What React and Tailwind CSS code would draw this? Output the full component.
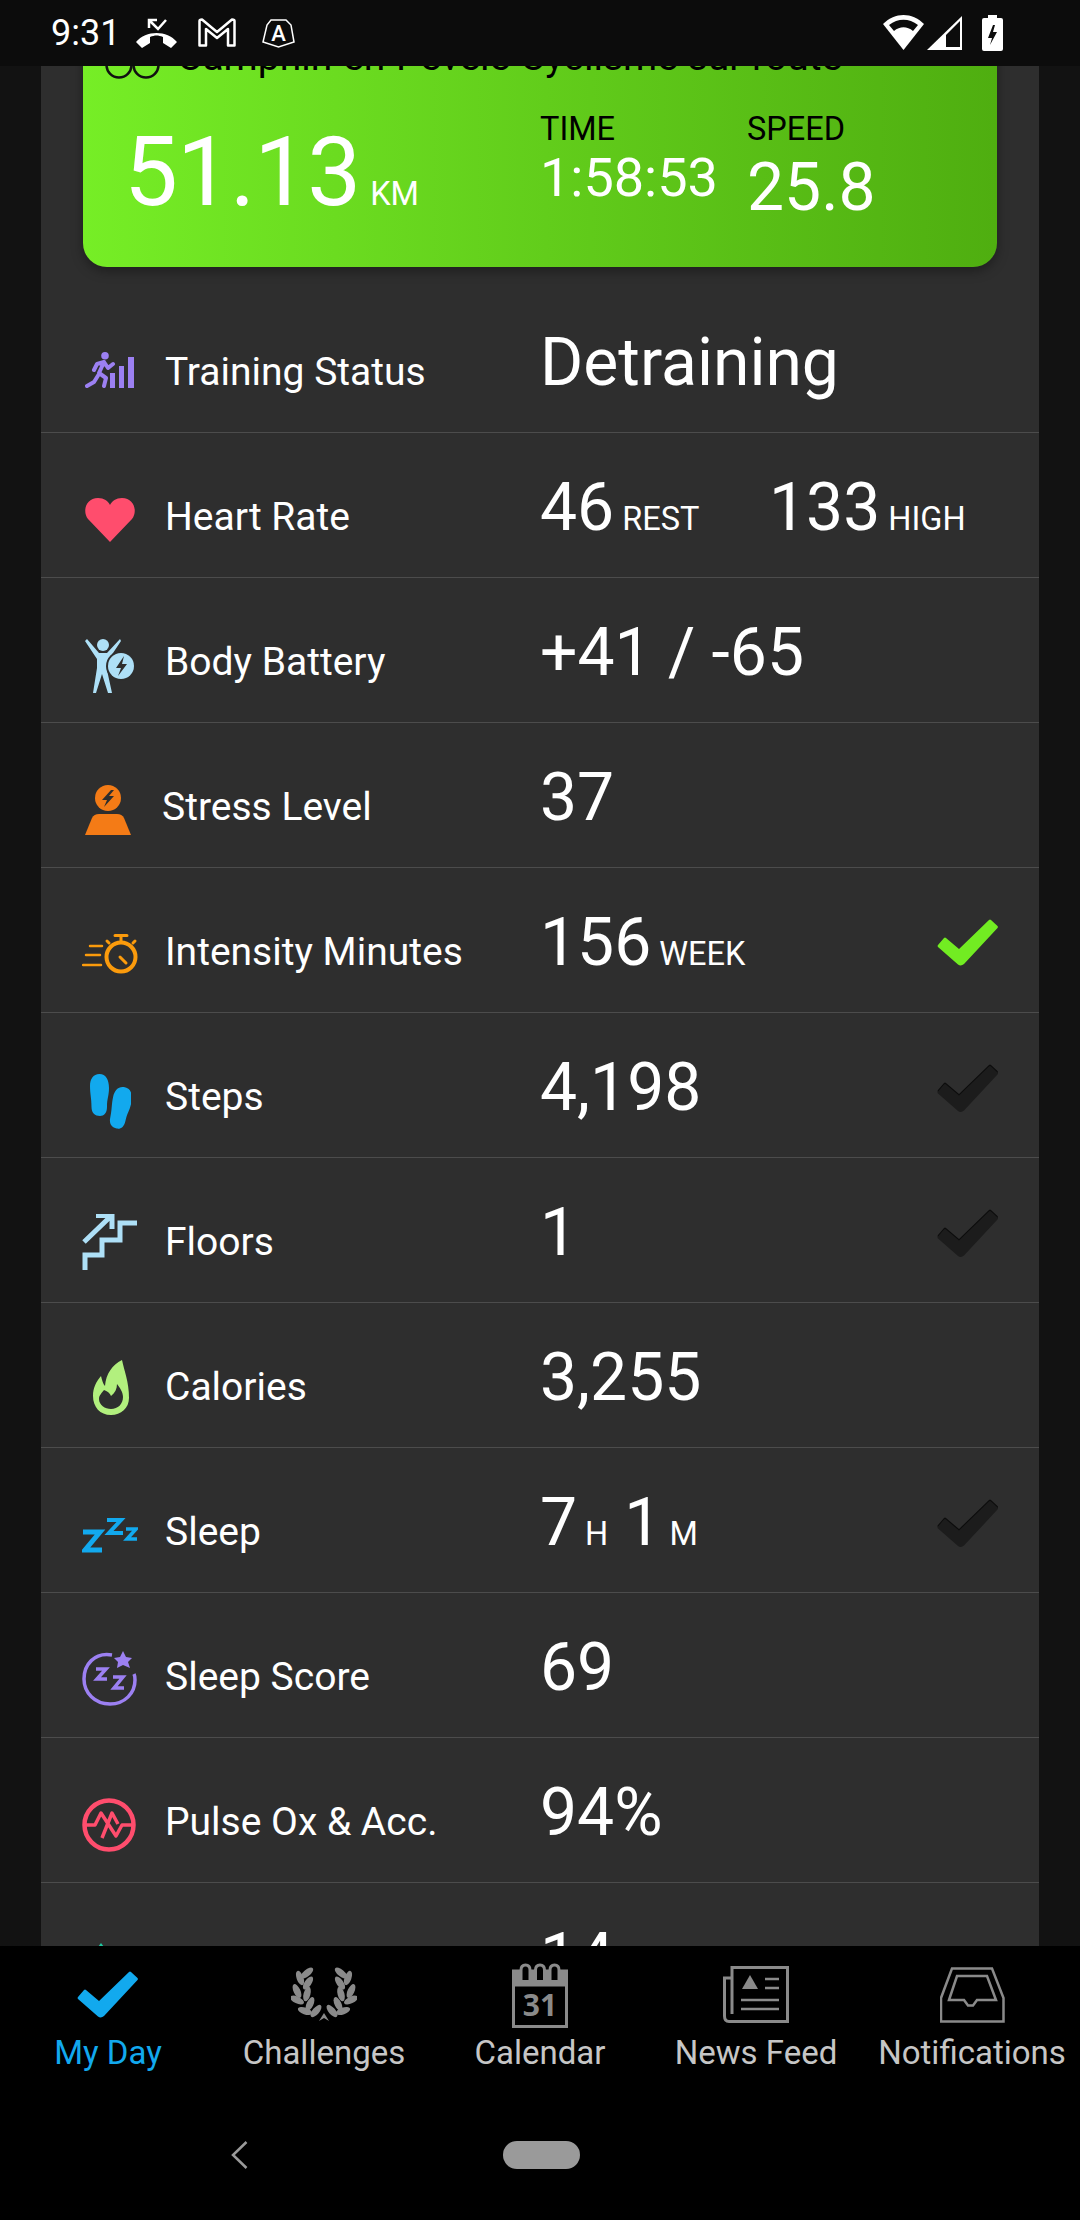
import React from "react";

const CHECK = "M52 1 Q53 0 54 1 L60.5 7 Q61.5 8 60.5 9 L27 45 Q24 47.5 21 45.5 L1 28 Q0 27 1 26 L7 19 Q8 18 9 19 L22 30 Z";

const CheckMark = ({ color = "#72ec22" }) => (
  <svg width="62" height="48" viewBox="0 0 62 48">
    <path d={CHECK} fill={color} />
  </svg>
);

const DarkCheck = () => (
  <svg width="62" height="48" viewBox="0 0 62 48">
    <path d={CHECK} fill="#0c0c0c" />
    <path d={CHECK} fill="#1c1c1c" transform="translate(0 1.6)" />
  </svg>
);

const TrainingIcon = () => (
  <svg width="50" height="36" viewBox="0 0 50 36" fill="none" stroke="#9c80f2" strokeWidth="4" strokeLinecap="round" strokeLinejoin="round">
    <circle cx="20" cy="3.8" r="3.8" fill="#9c80f2" stroke="none" />
    <path d="M19 10 L14 21 L21 26 L19 34 M14 22 L9 30 L2 34 M19 10 L12 12 L9 18 M19 10 L23 16 L28 12" />
    <path d="M25 21 H30 V36 H25 Z M34 14 H39 V36 H34 Z M43 5 H49 V36 H43 Z" fill="#9c80f2" stroke="none" />
  </svg>
);

const HeartIcon = () => (
  <svg width="50" height="44" viewBox="0 0 50 44">
    <path d="M25 44 L3 21 C-3 13 1 0 13 0 C19 0 23 3 25 7 C27 3 31 0 37 0 C49 0 53 13 47 21 Z" fill="#ff4d6d" />
  </svg>
);

const BatteryBodyIcon = () => (
  <svg width="50" height="55" viewBox="0 0 50 55">
    <circle cx="18" cy="7" r="6" fill="#aee0f7" />
    <path d="M0 3 L2 1 L14 15 H22 L35 1 L36 3 L24 21 L22 32 L27 55 H23 L17 36 L11 55 H8 L12 30 V21 Z" fill="#aee0f7" />
    <circle cx="36" cy="28" r="15" fill="#2e2e2e" />
    <circle cx="36" cy="28" r="13" fill="#aee0f7" />
    <path d="M39 18 L31 30 H36 L33 38 L42 26 H37 Z" fill="#2e2e2e" />
  </svg>
);

const StressIcon = () => (
  <svg width="46" height="50" viewBox="0 0 46 50">
    <circle cx="23" cy="13" r="13" fill="#f47b16" />
    <path d="M26 5 L17 15 H22 L19 22 L29 11 H24 L29 5 Z" fill="#2e2e2e" />
    <path d="M0 50 L7 33 Q9 29 14 29 L32 29 Q37 29 39 33 L46 50 Z" fill="#f47b16" />
  </svg>
);

const IntensityIcon = () => (
  <svg width="56" height="40" viewBox="0 0 56 40" fill="none" stroke="#fb9b0c" strokeWidth="3" strokeLinecap="round">
    <circle cx="39" cy="23" r="14.5" strokeWidth="4" />
    <path d="M33 1.5 H45 M39 2 V8 M27 9 L25 7 M51 9 L53 7" />
    <path d="M38 23 L44 29" strokeWidth="3" />
    <path d="M8 12 H20 M4 21 H18 M1 31 H19" strokeWidth="2.5" />
  </svg>
);

const FOOT = "M9.5 0 C16 0 19 6 19 14 C19 22 17 24 17 33 C17 39 14 42 10 42 C5 42 1.5 39 1.5 33 C1.5 24 0 20 0 12 C0 5 3 0 9.5 0 Z";

const StepsIcon = () => (
  <svg width="41" height="55" viewBox="0 0 41 55">
    <path d={FOOT} fill="#12a9ee" />
    <path d={FOOT} fill="#12a9ee" transform="translate(21 13) rotate(12 10 21)" />
  </svg>
);

const FloorsIcon = () => (
  <svg width="56" height="57" viewBox="0 0 56 57" fill="none" stroke="#aee0f7" strokeWidth="5">
    <path d="M3 56 V41 H20 V26 H38 V9 H55" />
    <path d="M2 28 L28 3 M14 1.5 H30 V15" />
  </svg>
);

const CaloriesIcon = () => (
  <svg width="36" height="55" viewBox="0 0 36 55">
    <path
      fillRule="evenodd"
      fill="#b2f07e"
      d="M29 0 C31 10 36 22 36 38 C36 48 28 55 18 55 C7 55 0 47 0 36 C0 28 3 22 8 16 C9 20 10 24 12 26 C13 14 19 5 29 0 Z M18 49 C25 49 30 44 30 37 C30 32 27 28 24 24 C24 29 22 33 18 36 C17 33 14 31 11 30 C9 33 6 35 6 39 C6 45 12 49 18 49 Z"
    />
  </svg>
);

const SleepIcon = () => (
  <svg width="56" height="36" viewBox="0 0 56 36" fill="none" stroke="#12a9ee">
    <path d="M1 15 H18 L3 33 H20" strokeWidth="5" />
    <path d="M25 3 H39 L27 16 H41" strokeWidth="4" />
    <path d="M44 12 H54 L45 22 H55" strokeWidth="3.5" />
  </svg>
);

const SleepScoreIcon = () => (
  <svg width="56" height="55" viewBox="0 0 56 55" fill="none" stroke="#9c80f2">
    <path d="M30 4 C12 1 2 14 2 28 C2 42 13 53 28 53 C43 53 53 42 53 29 C53 27 53 25 52 23" strokeWidth="3.5" />
    <path d="M41 0 L44 6 L50 7 L46 11 L48 17 L41 14 L35 17 L36 11 L32 7 L38 6 Z" fill="#9c80f2" stroke="none" />
    <path d="M14 18 H24 L15 28 H25 M31 26 H41 L32 37 H42" strokeWidth="3.5" />
  </svg>
);

const PulseIcon = () => (
  <svg width="54" height="54" viewBox="0 0 54 54" fill="none" stroke="#ff4d6d" strokeLinejoin="round">
    <ellipse cx="27" cy="27" rx="24.5" ry="24.5" strokeWidth="4.5" />
    <path d="M3 27 H13 L19 15 L34 38 L40 27 H51 M20 40 L30 15 L36 26" strokeWidth="3.5" />
  </svg>
);

const PartialIcon = () => (
  <svg width="20" height="8" viewBox="0 0 20 8">
    <path d="M10 0 L16 8 H4 Z" fill="#1fc8a0" />
  </svg>
);

const Leaf = ({ x, y, r }) => (
  <ellipse cx={x} cy={y} rx="7.5" ry="3.4" transform={`rotate(${r} ${x} ${y})`} />
);

const LaurelSide = () => (
  <>
    <Leaf x={16} y={6} r={-40} />
    <Leaf x={9} y={11} r={70} />
    <Leaf x={17} y={16} r={-55} />
    <Leaf x={6} y={24} r={65} />
    <Leaf x={16} y={27} r={-75} />
    <Leaf x={6} y={33} r={25} />
    <Leaf x={19} y={37} r={-65} />
    <Leaf x={14} y={44} r={20} />
    <Leaf x={25} y={44} r={-50} />
  </>
);

const LaurelIcon = () => (
  <svg width="66" height="56" viewBox="0 0 66 56" fill="#8a8a8a">
    <LaurelSide />
    <g transform="translate(66 0) scale(-1 1)">
      <LaurelSide />
    </g>
    <path d="M33 46 L38 54 L33 51 L28 54 Z" />
  </svg>
);

const CalendarIcon = () => (
  <svg width="56" height="65" viewBox="0 0 56 65" fill="none" stroke="#8a8a8a" strokeWidth="3">
    <path d="M1.5 9 H54.5 V63.5 H1.5 Z" />
    <path d="M1.5 8 H54.5 V22 H1.5 Z" fill="#8a8a8a" />
    <path d="M9 17 V7 Q9 2 13.500 2 Q18 2 18 7 V17 M23.500 17 V7 Q23.500 2 28 2 Q32.500 2 32.500 7 V17 M38 17 V7 Q38 2 42.500 2 Q47 2 47 7 V17" fill="#000" />
    <text x="28" y="53" textAnchor="middle" fill="#8a8a8a" stroke="none" fontSize="30" fontWeight="700" fontFamily="Open Sans, sans-serif">31</text>
  </svg>
);

const NewsIcon = () => (
  <svg width="66" height="58" viewBox="0 0 66 58" fill="none" stroke="#8a8a8a" strokeWidth="3">
    <path d="M9 48 V1.500 H64.500 V55.500 H6 Q1.500 55.500 1.500 50 V12 H9" />
    <path d="M27 9 L19 23 H35 Z" fill="#8a8a8a" stroke="none" />
    <path d="M42 13 H56 M42 22 H56 M18 34 H56 M18 43 H56" strokeWidth="2.500" />
  </svg>
);

const InboxIcon = () => (
  <svg width="65" height="56" viewBox="0 0 65 56" fill="none" stroke="#8a8a8a" strokeWidth="2.500">
    <path d="M1 31 L12 1.500 H52 L63.500 31 V54.500 H1 Z" />
    <path d="M9 33 L17 9 H47 L56 33 H37 L33 38.500 H28 L24 33 Z" />
  </svg>
);

const MissedCallIcon = () => (
  <svg width="41" height="30" viewBox="0 0 41 30" fill="#fff">
    <path d="M0 24 C10 12 31 12 41 24 L35 30 L27 25 V19 C22 17 19 17 14 19 V25 L6 30 Z" />
    <path d="M13 10 V2 H21 M13 2 L22 11 L30 2" fill="none" stroke="#fff" strokeWidth="2.500" />
  </svg>
);

const MailIcon = () => (
  <svg width="38" height="29" viewBox="0 0 38 29">
    <path d="M1.500 27.500 V3 Q1.500 1.500 4 1.500 L19 14 L34 1.500 Q36.500 1.500 36.500 3 V27.500 H30 V11 L19 20 L8 11 V27.500 Z" fill="none" stroke="#fff" strokeWidth="2.500" strokeLinejoin="round" />
  </svg>
);

const ShieldIcon = () => (
  <svg width="33" height="30" viewBox="0 0 33 30">
    <path d="M9 2 H24 L29 7 L32 24 L16.500 29 L1 24 L5 7 Z" fill="none" stroke="#fff" strokeWidth="1.500" />
    <text x="16.500" y="23" textAnchor="middle" fontSize="22" fontWeight="500" fill="#fff" fontFamily="Roboto, sans-serif">A</text>
  </svg>
);

const WifiIcon = () => (
  <svg width="41" height="35" viewBox="0 0 41 35">
    <path d="M0 9 C12 -3 29 -3 41 9 L20.500 35 Z" fill="#fff" />
    <path d="M6 10 C15 3 26 3 35 10 L30 16 C24 11 17 11 11 16 Z" fill="#0c0c0c" />
  </svg>
);

const SignalIcon = () => (
  <svg width="35" height="34" viewBox="0 0 35 34">
    <path d="M0 34 L35 0 V34 Z" fill="#fff" />
    <path d="M19 19 L33 5 V31 H19 Z" fill="#0c0c0c" />
  </svg>
);

const BatteryIcon = () => (
  <svg width="21" height="36" viewBox="0 0 21 36">
    <path d="M6 0 H15 V3 H19 Q21 3 21 5 V34 Q21 36 19 36 H2 Q0 36 0 34 V5 Q0 3 2 3 H6 Z" fill="#fff" />
    <path d="M11 10 L6 23 H10 L8 30 L15 17 H11 L13 10 Z" fill="#0c0c0c" />
  </svg>
);

const Unit = ({ children, className = "" }) => (
  <span className={`text-[32.5px] ml-[8px] ${className}`}>{children}</span>
);

const rows = [
  { icon: <TrainingIcon />, label: "Training Status", value: "Detraining", iconTop: "mt-[52px]" },
  {
    icon: <HeartIcon />,
    label: "Heart Rate",
    value: (
      <div className="flex items-baseline">
        <span className="w-[229px]">46<Unit>REST</Unit></span>
        <span>133<Unit>HIGH</Unit></span>
      </div>
    ),
    iconTop: "mt-[57px]",
  },
  { icon: <BatteryBodyIcon />, label: "Body Battery", value: "+41 / -65", iconTop: "mt-[57px]" },
  { icon: <StressIcon />, label: "Stress Level", value: "37", iconTop: "mt-[57px]", labelClass: "-ml-[3px] w-[378px]" },
  { icon: <IntensityIcon />, label: "Intensity Minutes", value: <>156<Unit>WEEK</Unit></>, check: "green", iconTop: "mt-[56px]", iconLeft: "-ml-[3px]" },
  { icon: <StepsIcon />, label: "Steps", value: "4,198", check: "dark", iconTop: "mt-[58px]", iconLeft: "ml-[5px]" },
  { icon: <FloorsIcon />, label: "Floors", value: "1", check: "dark", iconTop: "mt-[54px]", iconLeft: "-ml-[3px]" },
  { icon: <CaloriesIcon />, label: "Calories", value: "3,255", iconTop: "mt-[54px]", iconLeft: "ml-[8px]" },
  {
    icon: <SleepIcon />,
    label: "Sleep",
    value: (
      <>
        7<Unit>H</Unit><span className="ml-[16px]">1</span><Unit>M</Unit>
      </>
    ),
    check: "dark",
    iconTop: "mt-[57px]",
    iconLeft: "-ml-[3px]",
  },
  { icon: <SleepScoreIcon />, label: "Sleep Score", value: "69", iconTop: "mt-[55px]", iconLeft: "-ml-[3px]" },
  { icon: <PulseIcon />, label: "Pulse Ox & Acc.", value: "94%", iconTop: "mt-[57px]", iconLeft: "-ml-[3px]" },
  { icon: <PartialIcon />, label: "", value: "14", iconTop: "mt-[34px]", iconLeft: "ml-[6px]" },
];

const StatRow = ({ row }) => (
  <div className="relative flex items-baseline h-[145px] border-b border-[#4c4c4c] last:border-b-0">
    <div className={`self-start w-[80px] ml-[44px] h-[60px] flex items-center justify-start ${row.iconTop}`}>
      <div className={`shrink-0 ${row.iconLeft || ""}`}>{row.icon}</div>
    </div>
    <div className={`w-[375px] pt-[38px] text-[39px] leading-[74px] text-white ${row.labelClass || ""}`}>{row.label}</div>
    <div className="flex-1 pt-[38px] text-[66px] leading-[74px] text-white">{row.value}</div>
    {row.check && (
      <div className="absolute right-[40px] top-[51px]">
        {row.check === "green" ? <CheckMark /> : <DarkCheck />}
      </div>
    )}
  </div>
);

const ActivityCard = () => (
  <div className="relative ml-[42px] w-[914px] h-[271px] rounded-b-[24px] bg-gradient-to-r from-[#76ee26] to-[#4fae10] shadow-[0_4px_12px_rgba(0,0,0,0.35)]">
    <div className="flex items-baseline pl-[22px] pt-[37px] text-[39px] leading-[48px] text-black">
      <svg className="self-start mt-[4px] mr-[17px]" width="55" height="44" viewBox="0 0 55 44" fill="none" stroke="#111" strokeWidth="2.500">
        <circle cx="14" cy="28" r="12.500" />
        <circle cx="41" cy="28" r="12.500" />
      </svg>
      <span>Camphin-en-Pévèle Cyclisme sur route</span>
    </div>
    <div className="flex items-start mt-[12px]">
      <div className="w-[457px] pl-[41px] pt-[24px] text-white">
        <span className="text-[96px] leading-[110px] tracking-[-1px]">51.13</span>
        <span className="text-[32.5px] ml-[10px]">KM</span>
      </div>
      <div className="w-[207px] pt-[17px]">
        <div className="text-[32.5px] leading-[38px] text-black">TIME</div>
        <div className="text-[54px] leading-[60px] text-white">1:58:53</div>
      </div>
      <div className="pt-[17px]">
        <div className="text-[32.5px] leading-[38px] text-black">SPEED</div>
        <div className="mt-[2px] text-[66px] leading-[76px] text-white">25.8</div>
      </div>
    </div>
  </div>
);

const tabs = [
  { label: "My Day", icon: <CheckMark color="#12a9ee" />, active: true },
  { label: "Challenges", icon: <LaurelIcon /> },
  { label: "Calendar", icon: <CalendarIcon /> },
  { label: "News Feed", icon: <NewsIcon /> },
  { label: "Notifications", icon: <InboxIcon /> },
];

export default function App() {
  return (
    <div className="w-[1080px] h-[2220px] flex flex-col overflow-hidden bg-black [font-family:Roboto,sans-serif]">
      <div className="relative z-10 h-[66px] shrink-0 bg-[#0c0c0c] flex items-start justify-between pl-[51px] pr-[77px]">
        <div className="flex items-start">
          <span className="text-[36px] leading-[66px] text-white w-[85px]">9:31</span>
          <div className="mt-[18px] flex items-start">
            <MissedCallIcon />
            <div className="ml-[21px]"><MailIcon /></div>
            <div className="ml-[26px]"><ShieldIcon /></div>
          </div>
        </div>
        <div className="mt-[15px] flex items-start">
          <WifiIcon />
          <div className="ml-[3px] mt-[1px]"><SignalIcon /></div>
          <div className="ml-[20px]"><BatteryIcon /></div>
        </div>
      </div>

      <div className="flex-1 min-h-0 overflow-hidden bg-[#121212] px-[41px]">
        <div className="-mt-[70px] bg-[#2e2e2e]">
          <ActivityCard />
          <div className="mt-[21px]">
            {rows.map((row, i) => (
              <StatRow key={i} row={row} />
            ))}
          </div>
        </div>
      </div>

      <div className="relative z-10 h-[274px] shrink-0 bg-black">
        <div className="flex h-[140px]">
          {tabs.map((tab) => (
            <div key={tab.label} className="w-[216px] flex flex-col items-center">
              <div className="mt-[17px] h-[64px] flex items-center justify-center">{tab.icon}</div>
              <span className={`mt-[8px] text-[33px] leading-[36px] ${tab.active ? "text-[#12a9ee]" : "text-[#c6c6c6]"}`}>
                {tab.label}
              </span>
            </div>
          ))}
        </div>
        <div className="flex items-center pl-[231px] pt-[55px] gap-[255px]">
          <svg width="17" height="28" viewBox="0 0 17 28" fill="none" stroke="#9a9a9a" strokeWidth="2.500">
            <path d="M15.500 1 L2 14 L15.500 27" />
          </svg>
          <div className="w-[77px] h-[28px] rounded-full bg-[#9a9a9a]" />
        </div>
      </div>
    </div>
  );
}
